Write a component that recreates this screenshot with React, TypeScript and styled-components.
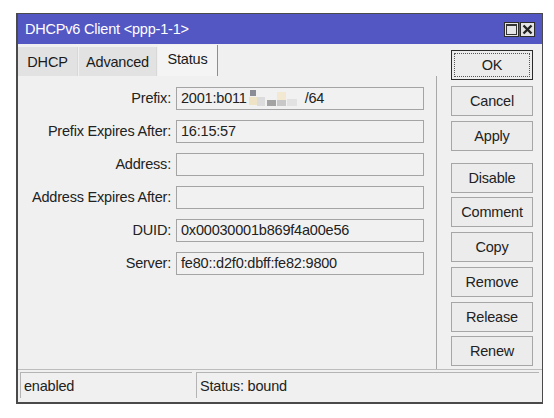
import React from "react";
import styled, { createGlobalStyle } from "styled-components";

const Global = createGlobalStyle`
  html, body { margin: 0; padding: 0; background: #ffffff; }
  body { font-family: "Liberation Sans", Arial, sans-serif; }
`;

const Page = styled.div`
  padding: 13px 0 0 16px;
`;

const Window = styled.div`
  width: 527px;
  height: 391px;
  display: flex;
  flex-direction: column;
  border: 1px solid #4a4a4a;
  border-left-width: 2px;
  border-bottom-width: 2px;
  background: #f0f0f0;
  box-sizing: border-box;
`;

const TitleBar = styled.div`
  height: 30px;
  background: #5357c4;
  display: flex;
  align-items: center;
  padding: 0 7px 0 7px;
  flex-shrink: 0;
`;

const Title = styled.div`
  color: #ffffff;
  font-size: 14.5px;
  flex: 1;
  letter-spacing: -0.2px;
`;

const TitleButton = styled.div`
  width: 15px;
  height: 15px;
  border: 1px solid #2c2c2c;
  background: #e4e4e4;
  margin-left: 1px;
  display: flex;
  align-items: center;
  justify-content: center;
  box-sizing: border-box;
`;

const Body = styled.div`
  flex: 1;
  display: flex;
  min-height: 0;
`;

const Main = styled.div`
  width: 419px;
  display: flex;
  flex-direction: column;
`;

const Tabs = styled.div`
  height: 32px;
  display: flex;
  align-items: flex-end;
  flex-shrink: 0;
`;

const Tab = styled.div<{ $active?: boolean; $w: number }>`
  width: ${(p) => p.$w}px;
  height: ${(p) => (p.$active ? 31 : 29)}px;
  margin-right: 1px;
  background: ${(p) => (p.$active ? "#f4f4f4" : "#e2e2e2")};
  border-right: 1px solid ${(p) => (p.$active ? "#8e8e8e" : "#d8d8d8")};
  display: flex;
  align-items: center;
  justify-content: center;
  font-size: 14.5px;
  color: #1a1a1a;
  letter-spacing: -0.2px;
  padding-bottom: ${(p) => (p.$active ? 3 : 0)}px;
  box-sizing: border-box;
`;

const Panel = styled.div`
  flex: 1;
  border-right: 1px solid #a8a8a8;
  padding: 11px 0 0 0;
  display: grid;
  grid-template-columns: 153px 248px;
  grid-auto-rows: 23px;
  row-gap: 10px;
  column-gap: 5px;
  align-content: start;
`;

const Label = styled.div`
  font-size: 14.5px;
  color: #222;
  text-align: right;
  line-height: 23px;
  white-space: nowrap;
  letter-spacing: -0.2px;
`;

const Field = styled.div`
  border: 1px solid #a4a4a4;
  background: #f1f1f1;
  font-size: 14.5px;
  color: #222;
  line-height: 21px;
  padding: 0 4px;
  white-space: nowrap;
  overflow: hidden;
  box-sizing: border-box;
  letter-spacing: -0.2px;
  display: flex;
  align-items: center;
`;

const Mask = styled.span`
  display: inline-flex;
  align-items: center;
  width: 58px;
  height: 17px;
  position: relative;
`;

const MaskBlock = styled.span<{ $c: string; $x: number; $y: number; $w: number; $h: number }>`
  position: absolute;
  left: ${(p) => p.$x}px;
  top: ${(p) => p.$y}px;
  width: ${(p) => p.$w}px;
  height: ${(p) => p.$h}px;
  background: ${(p) => p.$c};
`;

const Buttons = styled.div`
  flex: 1;
  display: flex;
  flex-direction: column;
  padding: 6px 0 0 14px;
`;

const Button = styled.div<{ $gap: number; $default?: boolean }>`
  width: 82px;
  height: 30px;
  margin-top: ${(p) => p.$gap}px;
  border: 1px solid ${(p) => (p.$default ? "#2a2a2a" : "#a6a6a6")};
  background: #ececec;
  box-sizing: border-box;
  display: flex;
  align-items: center;
  justify-content: center;
  font-size: 14.5px;
  color: #222;
  letter-spacing: -0.2px;
  position: relative;
  &::after {
    content: "";
    position: absolute;
    inset: 2px;
    border: 1px dotted ${(p) => (p.$default ? "#555" : "transparent")};
  }
`;

const StatusBar = styled.div`
  height: 33px;
  border-top: 1px solid #bdbdbd;
  display: flex;
  padding: 2px 3px 4px 2px;
  gap: 4px;
  flex-shrink: 0;
  box-sizing: border-box;
`;

const Cell = styled.div<{ $w?: number }>`
  width: ${(p) => (p.$w ? `${p.$w}px` : "auto")};
  flex: ${(p) => (p.$w ? "none" : "1")};
  border-top: 1px solid #b4b4b4;
  border-left: 1px solid #b4b4b4;
  font-size: 14.5px;
  color: #222;
  display: flex;
  align-items: center;
  padding-left: 3px;
  letter-spacing: -0.2px;
`;

const rows: [string, React.ReactNode][] = [
  ["Prefix:", null],
  ["Prefix Expires After:", "16:15:57"],
  ["Address:", ""],
  ["Address Expires After:", ""],
  ["DUID:", "0x00030001b869f4a00e56"],
  ["Server:", "fe80::d2f0:dbff:fe82:9800"],
];

const buttons: { label: string; gap: number; def?: boolean }[] = [
  { label: "OK", gap: 0, def: true },
  { label: "Cancel", gap: 6 },
  { label: "Apply", gap: 5 },
  { label: "Disable", gap: 12 },
  { label: "Comment", gap: 4 },
  { label: "Copy", gap: 5 },
  { label: "Remove", gap: 5 },
  { label: "Release", gap: 5 },
  { label: "Renew", gap: 4 },
];

function PrefixValue() {
  return (
    <>
      2001:b011
      <Mask>
        <MaskBlock $c="#8a8d96" $x={3} $y={0} $w={6} $h={6} />
        <MaskBlock $c="#efe3c6" $x={2} $y={7} $w={8} $h={8} />
        <MaskBlock $c="#dcdcdc" $x={10} $y={7} $w={8} $h={9} />
        <MaskBlock $c="#a3a3a3" $x={20} $y={10} $w={9} $h={6} />
        <MaskBlock $c="#f3e9d2" $x={30} $y={2} $w={9} $h={8} />
        <MaskBlock $c="#c8c8c8" $x={30} $y={10} $w={9} $h={6} />
        <MaskBlock $c="#e2e2e2" $x={40} $y={9} $w={10} $h={7} />
      </Mask>
      /64
    </>
  );
}

export default function App() {
  return (
    <Page>
      <Global />
      <Window>
        <TitleBar>
          <Title>DHCPv6 Client &lt;ppp-1-1&gt;</Title>
          <TitleButton>
            <svg width="11" height="11" viewBox="0 0 11 11">
              <rect x="0.5" y="0.5" width="10" height="10" fill="none" stroke="#333" />
              <rect x="0" y="0" width="11" height="2" fill="#333" />
            </svg>
          </TitleButton>
          <TitleButton>
            <svg width="11" height="11" viewBox="0 0 11 11">
              <path d="M1.5 1.5 L9.5 9.5 M9.5 1.5 L1.5 9.5" stroke="#222" strokeWidth="2.4" />
            </svg>
          </TitleButton>
        </TitleBar>
        <Body>
          <Main>
            <Tabs>
              <Tab $w={60}>DHCP</Tab>
              <Tab $w={78}>Advanced</Tab>
              <Tab $w={60} $active>
                Status
              </Tab>
            </Tabs>
            <Panel>
              {rows.map(([label, value]) => (
                <React.Fragment key={label}>
                  <Label>{label}</Label>
                  <Field>{value === null ? <PrefixValue /> : value}</Field>
                </React.Fragment>
              ))}
            </Panel>
          </Main>
          <Buttons>
            {buttons.map((b) => (
              <Button key={b.label} $gap={b.gap} $default={b.def}>
                {b.label}
              </Button>
            ))}
          </Buttons>
        </Body>
        <StatusBar>
          <Cell $w={168}>enabled</Cell>
          <Cell>Status: bound</Cell>
        </StatusBar>
      </Window>
    </Page>
  );
}
